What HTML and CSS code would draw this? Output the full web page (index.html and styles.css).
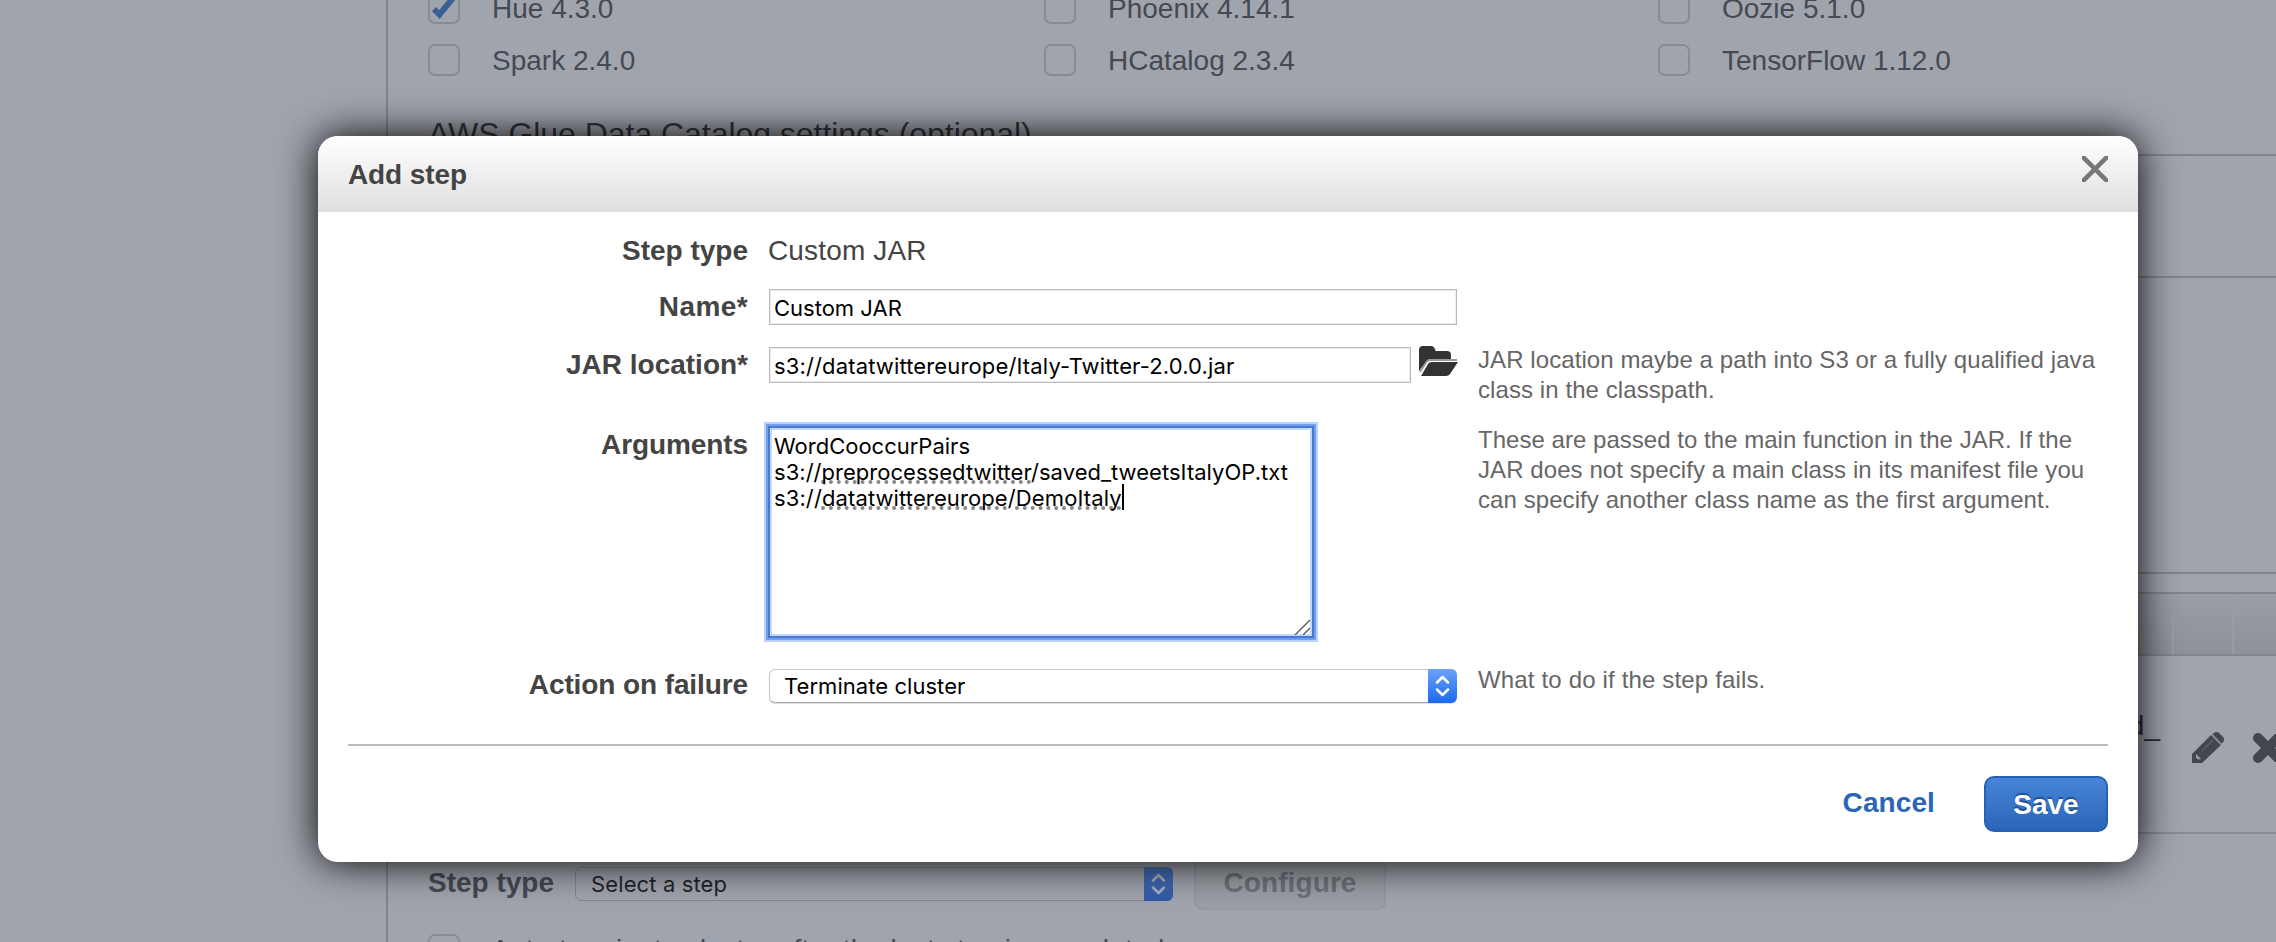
FILE: index.html
```
<!DOCTYPE html>
<html lang="en">
<head>
<meta charset="utf-8">
<title>Add step</title>
<link rel="stylesheet" href="styles.css">
</head>
<body>
<div class="page">
  <div class="sidebar"></div>
  <main class="content">
    <section class="apps">
      <div class="app"><span class="check on"><svg width="24" height="28" viewBox="0 0 24 28"><path d="M2 16l5.500 5.500L21 5" fill="none" stroke="#3a5f96" stroke-width="6"/></svg></span><span class="t">Hue 4.3.0</span></div>
      <div class="app"><span class="check"></span><span class="t">Phoenix 4.14.1</span></div>
      <div class="app"><span class="check"></span><span class="t">Oozie 5.1.0</span></div>
      <div class="app"><span class="check"></span><span class="t">Spark 2.4.0</span></div>
      <div class="app"><span class="check"></span><span class="t">HCatalog 2.3.4</span></div>
      <div class="app"><span class="check"></span><span class="t">TensorFlow 1.12.0</span></div>
    </section>
    <h2 class="glue">AWS Glue Data Catalog settings (optional)</h2>
    <div class="panel"></div>
    <div class="table-head"><i></i><i></i></div>
    <div class="table-row">
      <span class="t cell">saved_</span>
      <svg class="pencil" width="32" height="32" viewBox="0 0 32 32"><path d="M0 31V22L19 3l10 10L10 31z" fill="#42464f"/><path d="M20.500 2l2-1.500q2-1 4 0l5 5q1 2 0 4l-2 2z" fill="#42464f"/><path d="M20 3.500l9 9" stroke="#7d818a" stroke-width="1.500"/><path d="M10 19L21 8" stroke="#5c6069" stroke-width="1.500"/><path d="M4 22l5 5-3 .5-2-2z" fill="#9a9ea7"/></svg>
      <svg class="cross" width="32" height="32" viewBox="0 0 32 32"><path d="M6 6l20 20M26 6L6 26" stroke="#42464f" stroke-width="10" stroke-linecap="round"/></svg>
    </div>
    <div class="add-row">
      <b class="t add-label">Step type</b>
      <div class="select dim"><span class="t">Select a step</span><span class="arrows"><svg width="29" height="34" viewBox="0 0 29 34"><path d="M9 13.500l5.500-5.500 5.500 5.500M9 20.500l5.500 5.500 5.500-5.500" fill="none" stroke="#aab2c4" stroke-width="2.500" stroke-linecap="round" stroke-linejoin="round"/></svg></span></div>
      <div class="configure"><span class="t">Configure</span></div>
    </div>
    <div class="auto-row"><span class="check on"><svg width="24" height="28" viewBox="0 0 24 28"><path d="M2 18l5.500 5.500L21 9" fill="none" stroke="#3a5f96" stroke-width="6"/></svg></span><span class="t auto">Auto-terminate cluster after the last step is completed</span></div>
  </main>
</div>
<div class="modal">
  <header class="modal-head"><h1 class="t title">Add step</h1>
    <svg class="close" width="26" height="26" viewBox="0 0 26 26"><path d="M0 0l26 26M26 0L0 26" stroke="#777" stroke-width="4.500"/></svg>
  </header>
  <div class="form">
    <div class="row r-type"><label><span class="t">Step type</span></label><span class="t value">Custom JAR</span></div>
    <div class="row r-name"><label><span class="t wide">Name*</span></label><div class="input"><span class="t">Custom JAR</span></div></div>
    <div class="row r-jar"><label><span class="t">JAR location*</span></label><div class="input short"><span class="t spaced">s3://datatwittereurope/Italy-Twitter-2.0.0.jar</span></div>
      <svg class="folder" width="39" height="30" viewBox="0 0 39 30"><path d="M0 25V4q0-4 4-4h8q3.500 0 4.500 5H28q4 0 4 4v4H12q-3 0-5 3z" fill="#333"/><path d="M2 30L9 18q1-2 4-2h26l-8 12q-1.500 2-4 2z" fill="#333"/><path d="M1 26L7.500 16q1.200-2 4-2H38" fill="none" stroke="#999" stroke-width="1.800"/></svg>
      <p class="hint"><span class="t">JAR location maybe a path into S3 or a fully qualified java</span><span class="t">class in the classpath.</span></p></div>
    <div class="row r-args"><label><span class="t tight">Arguments</span></label>
      <div class="textarea"><span class="t">WordCooccurPairs</span><span class="t a2">s3://<u>preprocessedtwitter</u>/saved_tweetsItalyOP.txt</span><span class="t a3">s3://<u>datatwittereurope</u>/<u>DemoItaly</u></span><i class="caret"></i>
        <svg class="grip" width="16" height="16" viewBox="0 0 16 16"><path d="M1 16L16 1M9 16l7-7" stroke="#555" stroke-width="1.300"/></svg></div>
      <p class="hint"><span class="t first">These are passed to the main function in the JAR. If the</span><span class="t">JAR does not specify a main class in its manifest file you</span><span class="t">can specify another class name as the first argument.</span></p></div>
    <div class="row r-fail"><label><span class="t tight">Action on failure</span></label>
      <div class="select"><span class="t">Terminate cluster</span><span class="arrows"><svg width="29" height="34" viewBox="0 0 29 34"><path d="M9 13.500l5.500-5.500 5.500 5.500M9 20.500l5.500 5.500 5.500-5.500" fill="none" stroke="#fff" stroke-width="2.500" stroke-linecap="round" stroke-linejoin="round"/></svg></span></div>
      <p class="hint"><span class="t">What to do if the step fails.</span></p></div>
  </div>
  <footer class="modal-foot"><a class="t cancel">Cancel</a><div class="save"><span class="t">Save</span></div></footer>
</div>
</body>
</html>
```
FILE: styles.css
```
* { box-sizing: border-box; }
body { margin: 0; width: 2276px; height: 942px; overflow: hidden; background: #a0a4ad; font-family: "Liberation Sans", Arial, sans-serif; color: #444; }
.t { white-space: nowrap; display: inline-block; }
h1, h2, p { margin: 0; }
svg { display: block; flex: none; }
.page { display: flex; width: 2276px; height: 942px; overflow: hidden; color: #454952; }
.sidebar { width: 388px; flex: none; border-right: 2px solid #82868c; }
.content { flex: 1; min-width: 0; }
.apps { display: grid; grid-template-columns: 616px 614px 1fr; grid-template-rows: 52px 52px; margin: -18px 0 0 40px; height: 104px; font-size: 28px; }
.app { display: flex; align-items: center; gap: 32px; height: 52px; line-height: 50px; }
.app .t { padding-top: 2px; }
.check { width: 32px; height: 32px; flex: none; border: 2px solid #878b94; border-radius: 7px; }
.check svg { margin: -1px 0 0 2px; }
.glue { margin: 31px 0 0 40px; font-size: 32px; line-height: 34px; font-weight: 400; height: 37px; color: #32363e; white-space: nowrap; letter-spacing: -0.04px; }
.panel { height: 124px; border: solid #82868c; border-width: 2px 0; }
.table-head { margin-top: 294px; height: 84px; border-top: 2px solid #82868c; padding-top: 18px; display: flex; justify-content: flex-end; background: linear-gradient(#82868c, #82868c) 0 18px / 100% 2px no-repeat, linear-gradient(#82868c, #82868c) 0 100% / 100% 2px no-repeat, linear-gradient(#9a9ea7, #8d9199) 0 20px / 100% 60px no-repeat; }
.table-head i { width: 60px; margin: 2px 0 2px; border-left: 2px solid #989ca5; }
.table-head i:last-child { width: 44px; }
.table-row { height: 178px; border-bottom: 2px solid #878b93; display: flex; justify-content: flex-end; font-size: 28px; padding-top: 53px; color: #292c33; }
.cell { line-height: 34px; margin-right: 32px; height: 34px; }
.pencil { margin: 23px 28px 0 0; }
.cross { margin: 23px -8px 0 0; }
.add-row { display: flex; margin: 33px 0 0 40px; height: 43px; }
.add-label { font-size: 28px; line-height: 31px; width: 147px; }
.select { width: 688px; height: 34px; border: 1px solid #c8c8c8; border-bottom-color: #aaa; border-radius: 6px; display: flex; justify-content: space-between; font-family: Inter, sans-serif; font-size: 22px; line-height: 33px; letter-spacing: 0.05px; padding-left: 14px; color: #000; background: #fff; box-shadow: 0 1px 1px #ddd; }
.arrows { width: 29px; height: 34px; margin: -1px -1px 0 0; border-radius: 0 6px 6px 0; background: linear-gradient(#6aa3f6, #1d68f2); }
.select.dim { width: 598px; background: none; border-color: #83878f; color: #22252b; box-shadow: none; letter-spacing: 0.12px; padding-left: 15px; }
.dim .arrows { background: linear-gradient(#4a72ba, #3159a8); }
.configure { margin: -7px 0 0 21px; width: 192px; height: 50px; border: 2px solid #9498a0; border-radius: 8px; background: #9b9fa5; color: #6d7179; font-size: 28px; font-weight: 700; line-height: 41px; text-align: center; letter-spacing: 0.1px; }
.auto-row { display: flex; margin: 24px 0 0 40px; gap: 31px; font-size: 28px; }
.auto { line-height: 32px; letter-spacing: 0.22px; }

.modal { position: absolute; left: 318px; top: 136px; width: 1820px; height: 726px; border-radius: 20px; background: #fff; box-shadow: 0 0 40px #000; display: flex; flex-direction: column; }
.modal-head { height: 76px; border-radius: 20px 20px 0 0; background: linear-gradient(#fff, #dfdfdf); display: flex; justify-content: space-between; padding: 20px 30px 0; }
.title { font-size: 28px; line-height: 37px; letter-spacing: -0.1px; }
.form { height: 534px; border-bottom: 2px solid #bbb; margin: 0 30px; padding: 20px 0 0; }
.row { display: flex; }
.row label { width: 400px; flex: none; text-align: right; font-weight: 700; font-size: 28px; line-height: 36px; padding-top: 1px; }
.row label, .hint { white-space: nowrap; }
.wide { letter-spacing: 0.4px; }
.tight { letter-spacing: -0.1px; }
.spaced { letter-spacing: 0.14px; }
.value { font-size: 28px; line-height: 36px; margin: 1px 0 0 20px; letter-spacing: 0.15px; }
.r-type { height: 56px; }
.r-name { height: 58px; }
.r-jar { height: 80px; }
.r-args { height: 240px; }
.input { width: 688px; height: 36px; border: 1px solid #b9b9b9; box-shadow: inset 0 0 0 1px #ececec; margin: 1px 0 0 21px; padding-left: 4px; font-family: Inter, sans-serif; font-size: 22px; line-height: 36px; color: #000; }
.short { width: 642px; }
.folder { margin: 0 0 0 8px; }
.hint { display: flex; flex-direction: column; align-items: flex-start; margin: -1px 0 0 20px; font-size: 24px; line-height: 30px; letter-spacing: 0.08px; color: #666; }
.first { letter-spacing: 0.03px; }
.r-args .hint { margin-left: 164px; }
.r-fail .hint { margin-left: 21px; letter-spacing: 0.16px; }
.textarea { position: relative; width: 546px; height: 212px; margin: 0 0 0 20px; border: 2px solid #4878d0; box-shadow: 0 0 0 2px #6d9ff3, 0 0 0 4px #bcd2fa, inset 0 0 0 2px #c3d8fb; padding: 5px 4px; display: flex; flex-direction: column; align-items: flex-start; font-family: Inter, sans-serif; font-size: 22px; line-height: 26px; color: #000; }
.a2 { letter-spacing: 0.03px; }
.a3 { letter-spacing: 0.11px; }
.textarea u { text-decoration: underline dotted #888 4px; text-underline-offset: 0; text-decoration-skip-ink: none; }
.caret { position: absolute; left: 352px; top: 56px; width: 2px; height: 26px; background: #000; }
.grip { position: absolute; right: 2px; bottom: 1px; }
.r-fail .select { margin: 3px 0 0 21px; }
.modal-foot { display: flex; justify-content: flex-end; padding: 30px 30px 0; color: #2a66b7; font-weight: 700; }
.cancel { font-size: 28px; line-height: 36px; margin-right: 49px; margin-top: 9px; letter-spacing: 0.1px; }
.save { width: 124px; height: 56px; border: 2px solid #2861b4; border-radius: 10px; background: linear-gradient(#4785d8, #2a66b7); color: #fff; font-size: 28px; line-height: 53px; text-align: center; text-shadow: 0 -2px 1px #1d4f96; }
```
